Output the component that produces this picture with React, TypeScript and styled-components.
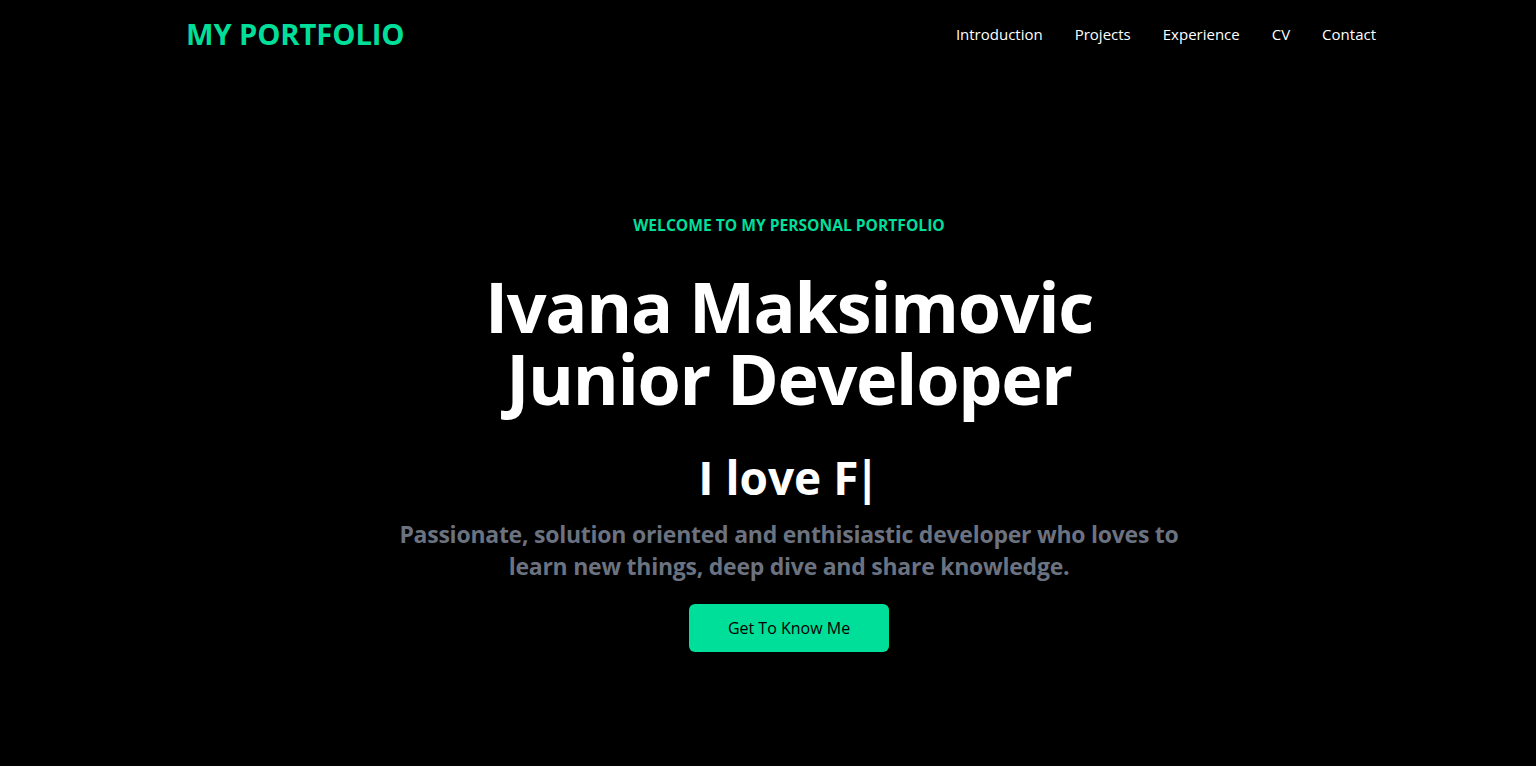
import React from "react";
import styled, { createGlobalStyle } from "styled-components";

const Global = createGlobalStyle`
  html, body { margin: 0; padding: 0; background: #000; }
  body { font-family: "Open Sans", "Noto Sans", sans-serif; color: #fff; }
  * { box-sizing: border-box; }
`;

const Page = styled.div`
  min-height: 766px;
  background: #000;
  padding-left: 42px;
`;

const Header = styled.header`
  display: flex;
  align-items: center;
  justify-content: space-between;
  height: 68px;
  padding: 0 144px;
`;

const Logo = styled.h1`
  margin: 0;
  font-size: 29.2px;
  font-weight: 700;
  color: #00df9a;
  letter-spacing: -0.1px;
`;

const Nav = styled.ul`
  display: flex;
  list-style: none;
  margin: 0;
  padding: 0;
`;

const NavItem = styled.li`
  padding: 0 16px;
  font-size: 15px;
  color: #fff;
`;

const Hero = styled.section`
  display: flex;
  flex-direction: column;
  align-items: center;
  text-align: center;
  padding-top: 146px;
`;

const Welcome = styled.p`
  margin: 0;
  font-size: 15.6px;
  font-weight: 700;
  color: #00df9a;
  text-transform: uppercase;
`;

const Name = styled.h1`
  margin: 34px 0 0;
  font-size: 70px;
  line-height: 72px;
  font-weight: 700;
  letter-spacing: -1.3px;
  color: #fff;
`;

const Typing = styled.div`
  margin-top: 35px;
  font-size: 46px;
  line-height: 56px;
  font-weight: 700;
`;

const Cursor = styled.span`
  margin-left: -4px;
`;

const Tagline = styled.p`
  margin: 13px 0 0;
  font-size: 23px;
  line-height: 32px;
  font-weight: 700;
  letter-spacing: -0.25px;
  color: #6b7280;
`;

const Button = styled.button`
  margin-top: 22px;
  width: 200px;
  height: 48px;
  border: none;
  border-radius: 6px;
  background: #00df9a;
  color: #000;
  font-family: inherit;
  font-size: 16px;
  font-weight: 500;
`;

export default function App() {
  return (
    <Page>
      <Global />
      <Header>
        <Logo>MY PORTFOLIO</Logo>
        <Nav>
          <NavItem>Introduction</NavItem>
          <NavItem>Projects</NavItem>
          <NavItem>Experience</NavItem>
          <NavItem>CV</NavItem>
          <NavItem>Contact</NavItem>
        </Nav>
      </Header>
      <Hero>
        <Welcome>Welcome to my personal portfolio</Welcome>
        <Name>
          Ivana Maksimovic
          <br />
          Junior Developer
        </Name>
        <Typing>
          I love F<Cursor>|</Cursor>
        </Typing>
        <Tagline>
          Passionate, solution oriented and enthisiastic developer who loves to
          <br />
          learn new things, deep dive and share knowledge.
        </Tagline>
        <Button>Get To Know Me</Button>
      </Hero>
    </Page>
  );
}
